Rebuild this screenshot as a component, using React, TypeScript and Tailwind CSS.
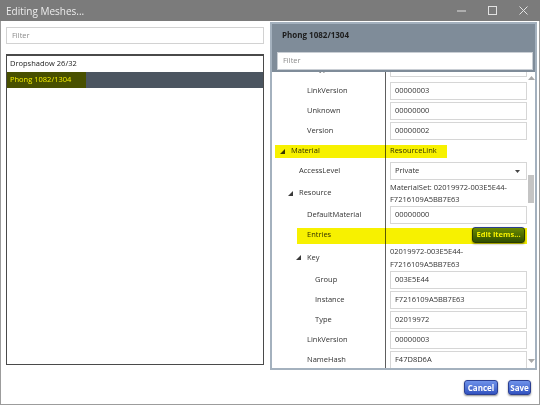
import React from 'react';

function Tri() {
  return (
    <svg width="5" height="5" viewBox="0 0 5 5" className="shrink-0">
      <polygon points="5,0 5,5 0,5" fill="#3a3a3a" />
    </svg>
  );
}

function Input({ v }: { v: string }) {
  return (
    <div className="ml-[4px] flex h-[18px] w-[137px] items-center border border-[#d6d6d6] bg-white pl-[4px] text-[#333]">
      {v}
    </div>
  );
}

function GRow({
  h,
  labelCls,
  tri,
  label,
  children,
  mark,
  valueCls,
}: {
  h: string;
  labelCls: string;
  tri?: boolean;
  label: string;
  children?: React.ReactNode;
  mark?: React.ReactNode;
  valueCls?: string;
}) {
  return (
    <div className={`relative flex shrink-0 ${h}`}>
      <div className={`flex w-[114px] shrink-0 items-center border-r border-[#5e5e5e] text-[#333] ${labelCls}`}>
        {tri && <Tri />}
        <span className={tri ? 'ml-[6px]' : ''}>{label}</span>
      </div>
      <div className={`flex flex-1 items-center ${valueCls ?? ''}`}>{children}</div>
      {mark}
    </div>
  );
}

function BlueButton({ label, cls }: { label: string; cls: string }) {
  return (
    <div
      className={`flex items-center justify-center rounded-[3px] border border-[#2b3f92] bg-gradient-to-b from-[#6f92ea] to-[#3353c0] font-bold text-white shadow-[0_1px_2px_rgba(0,0,0,0.45)] ${cls}`}
    >
      {label}
    </div>
  );
}

export default function App() {
  return (
    <div className="flex h-[405px] w-[540px] flex-col overflow-hidden bg-white font-['Open_Sans',sans-serif] text-[7.5px] leading-none">
      {/* Title bar */}
      <div className="flex h-[21px] shrink-0 items-center justify-between bg-[#7b7b7b]">
        <span className="pl-[6px] text-[10px] text-[#ececec]">Editing Meshes...</span>
        <div className="flex h-full pr-[1px]">
          <div className="flex w-[31px] items-center justify-center">
            <svg width="9" height="9" viewBox="0 0 9 9">
              <line x1="0" y1="5" x2="9" y2="5" stroke="#e2e2e2" strokeWidth="1" />
            </svg>
          </div>
          <div className="flex w-[31px] items-center justify-center">
            <svg width="9" height="9" viewBox="0 0 9 9">
              <rect x="0.5" y="0.5" width="8" height="8" fill="none" stroke="#e2e2e2" strokeWidth="1" />
            </svg>
          </div>
          <div className="flex w-[31px] items-center justify-center">
            <svg width="9" height="9" viewBox="0 0 9 9">
              <path d="M0.5 0.5 L8.5 8.5 M8.5 0.5 L0.5 8.5" stroke="#e2e2e2" strokeWidth="1" />
            </svg>
          </div>
        </div>
      </div>

      {/* Body */}
      <div className="flex flex-1 flex-col border-x border-b border-[#9c9c9c]">
        <div className="mt-[1px] flex h-[348px] shrink-0 pl-[5px]">
          {/* Left column */}
          <div className="flex w-[258px] shrink-0 flex-col pt-[5px]">
            <div className="flex h-[17px] items-center border border-[#d2d2d2] pl-[5px] text-[#8c8c8c]">Filter</div>
            <div className="mt-[10px] flex h-[311px] flex-col border border-t-2 border-[#4a4a4a]">
              <div className="flex h-[16px] items-center pl-[3px] text-[#222]">Dropshadow 26/32</div>
              <div className="relative flex h-[16px] items-center bg-[#4b5560] pl-[3px] text-white">
                Phong 1082/1304
                <div className="absolute left-0 top-0 h-full w-[79px] bg-[#f5f000] mix-blend-multiply" />
              </div>
            </div>
          </div>

          {/* Right panel */}
          <div className="ml-[6px] flex w-[267px] shrink-0 flex-col border-2 border-[#a4b1be]">
            <div className="flex h-[48px] shrink-0 flex-col bg-[#7f8c99] pt-[5px]">
              <div className="flex h-[12px] items-center pl-[10px] text-[8px] font-bold text-[#1c1c1c]">Phong 1082/1304</div>
              <div className="ml-[5px] mr-[2px] mt-[11px] flex h-[18px] items-center border border-[#c9ced4] bg-white pl-[5px] text-[#8c8c8c]">
                Filter
              </div>
            </div>
            <div className="flex h-[296px] overflow-hidden">
              <div className="flex w-[255px] shrink-0 flex-col">
                <div className="-mt-[11px] flex flex-col">
                  {/* partially scrolled-out row */}
                  <div className="flex h-[20px] shrink-0">
                    <div className="flex w-[114px] shrink-0 items-start border-r border-[#5e5e5e] pl-[43px] pt-[4px] text-[#333]">
                      Type
                    </div>
                    <div className="flex flex-1 items-start">
                      <div className="-mt-[2px] ml-[4px] flex h-[18px] w-[137px] items-center border border-[#d6d6d6] bg-white pl-[4px] text-[#333]">
                        02019972
                      </div>
                    </div>
                  </div>
                  <GRow h="h-[20px]" labelCls="pl-[35px]" label="LinkVersion">
                    <Input v="00000003" />
                  </GRow>
                  <GRow h="h-[20px]" labelCls="pl-[35px]" label="Unknown">
                    <Input v="00000000" />
                  </GRow>
                  <GRow h="h-[20px]" labelCls="pl-[35px]" label="Version">
                    <Input v="00000002" />
                  </GRow>
                  <GRow
                    h="h-[20px]"
                    labelCls="pl-[8px]"
                    tri
                    label="Material"
                    valueCls="pl-[4px] text-[#333]"
                    mark={<div className="absolute left-[3px] top-[4px] h-[13px] w-[172px] bg-[#f7f100] mix-blend-multiply" />}
                  >
                    ResourceLink
                  </GRow>
                  <GRow h="h-[20px]" labelCls="pl-[27px]" label="AccessLevel">
                    <div className="ml-[4px] flex h-[18px] w-[137px] items-center justify-between border border-[#d6d6d6] bg-white pl-[4px] pr-[6px] text-[#333]">
                      <span>Private</span>
                      <svg width="5" height="3" viewBox="0 0 5 3">
                        <polygon points="0,0 5,0 2.5,3" fill="#444" />
                      </svg>
                    </div>
                  </GRow>
                  <GRow h="h-[24px]" labelCls="pl-[16px]" tri label="Resource" valueCls="pl-[4px] text-[#333]">
                    <div className="flex flex-col whitespace-nowrap leading-[12px]">
                      <span>MaterialSet: 02019972-003E5E44-</span>
                      <span>F7216109A5BB7E63</span>
                    </div>
                  </GRow>
                  <GRow h="h-[20px]" labelCls="pl-[35px]" label="DefaultMaterial">
                    <Input v="00000000" />
                  </GRow>
                  <GRow
                    h="h-[20px]"
                    labelCls="pl-[35px]"
                    label="Entries"
                    valueCls="justify-end pr-[2px]"
                    mark={<div className="absolute left-[25px] top-[3px] h-[16px] w-[230px] bg-[#f7f100] mix-blend-multiply" />}
                  >
                    <BlueButton label="Edit Items..." cls="h-[16px] w-[53px]" />
                  </GRow>
                  <GRow h="h-[25px]" labelCls="pl-[24px]" tri label="Key" valueCls="pl-[4px] text-[#333]">
                    <div className="flex flex-col whitespace-nowrap leading-[12.5px]">
                      <span>02019972-003E5E44-</span>
                      <span>F7216109A5BB7E63</span>
                    </div>
                  </GRow>
                  <GRow h="h-[20px]" labelCls="pl-[43px]" label="Group">
                    <Input v="003E5E44" />
                  </GRow>
                  <GRow h="h-[20px]" labelCls="pl-[43px]" label="Instance">
                    <Input v="F7216109A5BB7E63" />
                  </GRow>
                  <GRow h="h-[20px]" labelCls="pl-[43px]" label="Type">
                    <Input v="02019972" />
                  </GRow>
                  <GRow h="h-[20px]" labelCls="pl-[35px]" label="LinkVersion">
                    <Input v="00000003" />
                  </GRow>
                  <GRow h="h-[20px]" labelCls="pl-[35px]" label="NameHash">
                    <Input v="F47D8D6A" />
                  </GRow>
                </div>
              </div>
              {/* Scrollbar */}
              <div className="flex w-[8px] shrink-0 flex-col items-center pb-[5px] pt-[4px]">
                <svg width="7" height="4" viewBox="0 0 7 4" className="shrink-0">
                  <polygon points="0,4 7,4 3.5,0" fill="#a8a8a8" />
                </svg>
                <div className="mt-[95px] h-[28px] w-[6px] shrink-0 bg-[#c4c4c4]" />
                <div className="flex-1" />
                <svg width="7" height="4" viewBox="0 0 7 4" className="shrink-0">
                  <polygon points="0,0 7,0 3.5,4" fill="#a8a8a8" />
                </svg>
              </div>
            </div>
          </div>
        </div>

        {/* Footer */}
        <div className="mt-[10px] flex justify-end gap-[10px] pr-[8px]">
          <BlueButton label="Cancel" cls="h-[15px] w-[34px] text-[8px]" />
          <BlueButton label="Save" cls="h-[15px] w-[23px] text-[8px]" />
        </div>
      </div>
    </div>
  );
}
